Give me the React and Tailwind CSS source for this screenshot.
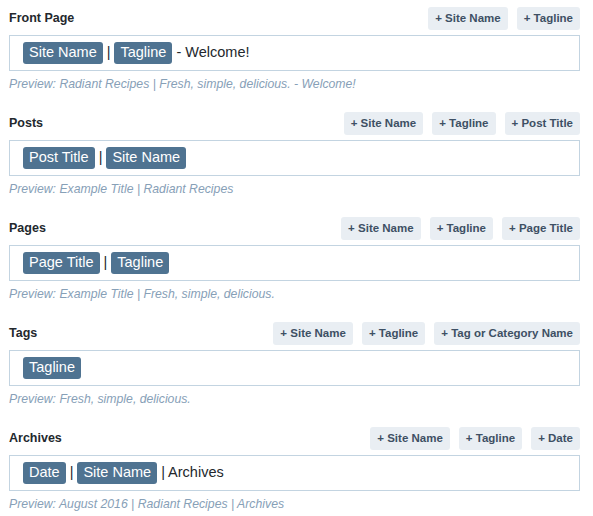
import React from 'react';

const sections = [
  {
    title: 'Front Page',
    buttons: ['Site Name', 'Tagline'],
    parts: [{ tag: 'Site Name' }, '|', { tag: 'Tagline' }, '- Welcome!'],
    preview: 'Preview: Radiant Recipes | Fresh, simple, delicious. - Welcome!',
  },
  {
    title: 'Posts',
    buttons: ['Site Name', 'Tagline', 'Post Title'],
    parts: [{ tag: 'Post Title' }, '|', { tag: 'Site Name' }],
    preview: 'Preview: Example Title | Radiant Recipes',
  },
  {
    title: 'Pages',
    buttons: ['Site Name', 'Tagline', 'Page Title'],
    parts: [{ tag: 'Page Title' }, '|', { tag: 'Tagline' }],
    preview: 'Preview: Example Title | Fresh, simple, delicious.',
  },
  {
    title: 'Tags',
    buttons: ['Site Name', 'Tagline', 'Tag or Category Name'],
    parts: [{ tag: 'Tagline' }],
    preview: 'Preview: Fresh, simple, delicious.',
  },
  {
    title: 'Archives',
    buttons: ['Site Name', 'Tagline', 'Date'],
    parts: [{ tag: 'Date' }, '|', { tag: 'Site Name' }, '| Archives'],
    preview: 'Preview: August 2016 | Radiant Recipes | Archives',
  },
];

const Token = ({ label }) => (
  <span className="inline-flex items-center h-[22px] px-[6px] rounded-[3px] bg-[#4f7391] text-white text-[14.5px]">
    {label}
  </span>
);

const Section = ({ s }) => (
  <div className="mb-[20px]">
    <div className="flex items-center justify-between h-[23px]">
      <h3 className="text-[12.5px] font-bold text-[#23282d]">{s.title}</h3>
      <div className="flex gap-[9px]">
        {s.buttons.map((b) => (
          <button
            key={b}
            className="h-[23px] px-[7px] rounded-[3px] bg-[#e9eef3] text-[11.5px] font-bold text-[#3e5064]"
          >
            + {b}
          </button>
        ))}
      </div>
    </div>
    <div className="mt-[5px] h-[36px] border border-[#c3d4e1] flex items-center gap-[4px] pl-[13px] text-[14.5px] text-[#23282d] whitespace-pre">
      {s.parts.map((p, i) =>
        typeof p === 'string' ? <span key={i}>{p}</span> : <Token key={i} label={p.tag} />
      )}
    </div>
    <p className="mt-[5px] h-[16px] text-[12.25px] leading-[16px] italic text-[#87a0b7]">{s.preview}</p>
  </div>
);

export default function App() {
  return (
    <div
      className="w-[593px] h-[516px] bg-white pl-[9px] pr-[13px] pt-[7px] overflow-hidden"
      style={{ fontFamily: '"Liberation Sans", Arial, sans-serif' }}
    >
      {sections.map((s) => (
        <Section key={s.title} s={s} />
      ))}
    </div>
  );
}
